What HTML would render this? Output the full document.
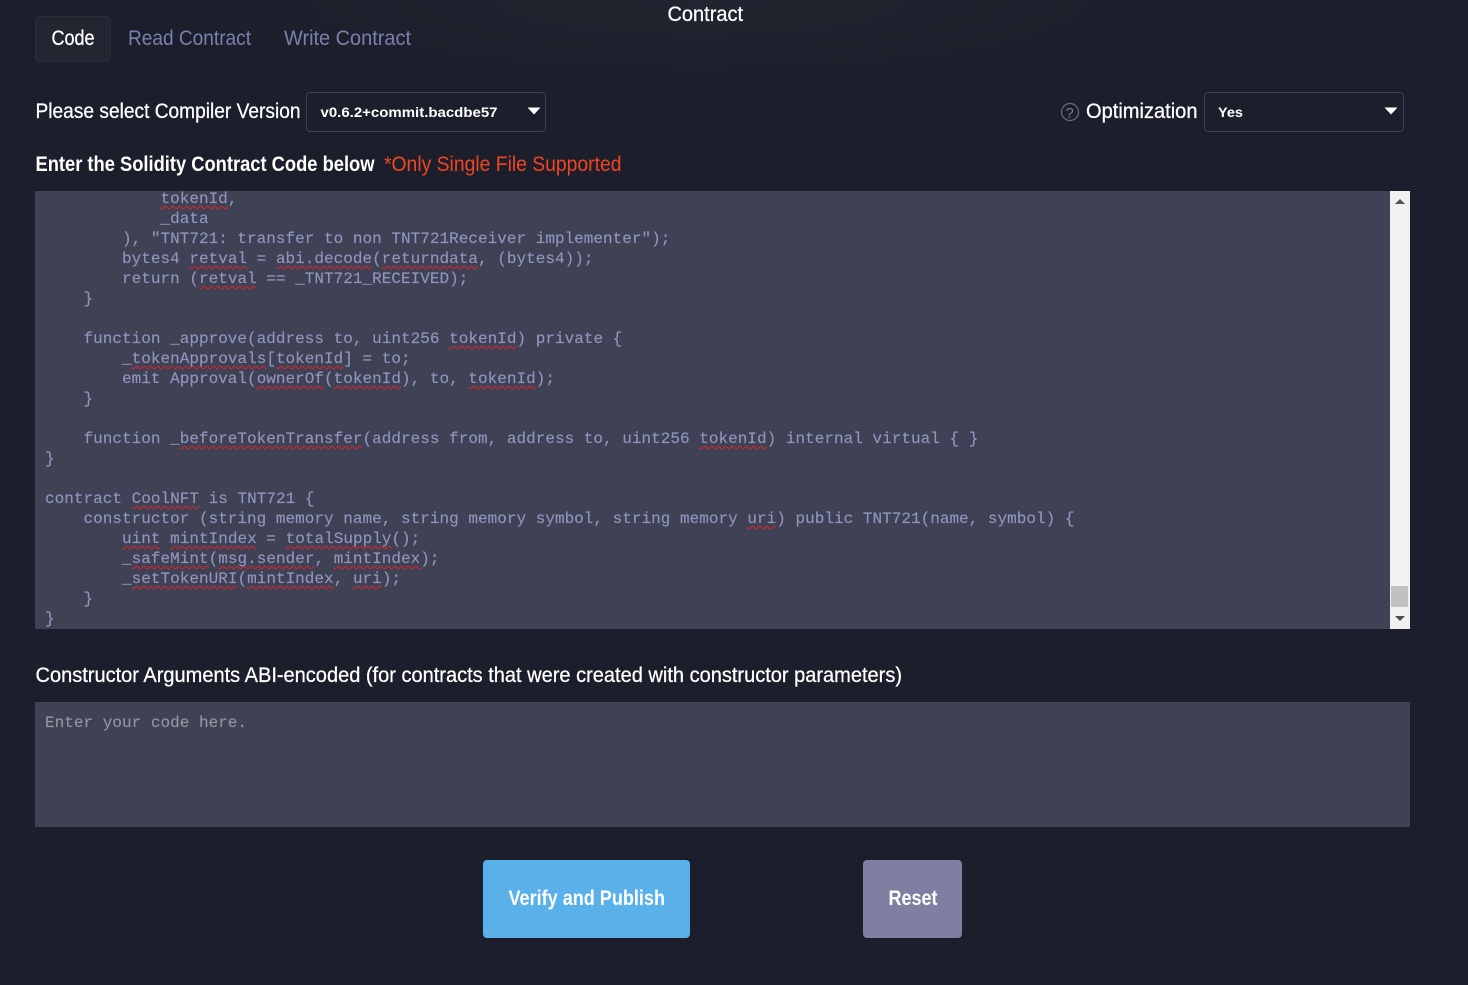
<!DOCTYPE html>
<html lang="en">
<head>
<meta charset="utf-8">
<title>Contract</title>
<style>
html,body{margin:0;padding:0;background:#1c1f2b;}
body{position:relative;width:1468px;height:985px;overflow:hidden;font-family:"Liberation Sans",sans-serif;}
.glow{position:absolute;left:0;top:0;width:1468px;height:90px;background:radial-gradient(ellipse 520px 90px at 700px 0,#212530 0%,#1c1f2b 100%);}
.tab{position:absolute;left:35px;top:16px;width:74px;height:44px;background:#232631;border:1px solid #2b2e3a;border-radius:5px;}
.sel{position:absolute;box-sizing:border-box;height:40px;top:92px;border:1px solid #3c3e56;border-radius:4px;background:#1c1f2b;}
.panel{position:absolute;left:35px;background:#3f4154;}
#code{top:191px;width:1355px;height:438px;overflow:hidden;}
#code pre{position:absolute;left:10px;top:-2px;margin:0;font:16px/20px "Liberation Mono",monospace;letter-spacing:.02px;color:#9095bd;white-space:pre;-webkit-text-stroke:.15px #9095bd;}
#code u{text-decoration:underline wavy #e3222b 1.3px;text-underline-offset:1.5px;text-decoration-skip-ink:none;}
#abi{top:702px;width:1375px;height:125px;}
#abi div{position:absolute;left:10px;top:11px;font:16px/20px "Liberation Mono",monospace;letter-spacing:.02px;color:#92949f;-webkit-text-stroke:.15px #92949f;}
.sb{position:absolute;left:1390px;top:191px;width:20px;height:438px;background:#f1f1f1;}
.thumb{position:absolute;left:1px;top:395px;width:17px;height:21px;background:#c1c1c1;}
.up{position:absolute;left:5px;top:8px;width:0;height:0;border-left:5px solid transparent;border-right:5px solid transparent;border-bottom:5px solid #505050;}
.dn{position:absolute;left:5px;top:425px;width:0;height:0;border-left:5px solid transparent;border-right:5px solid transparent;border-top:5px solid #505050;}
.btn{position:absolute;top:860px;height:78px;border-radius:4px;}
svg.t{position:absolute;left:0;top:0;width:1468px;height:985px;}
svg.t text{font-family:"Liberation Sans",sans-serif;fill:#fff;}
svg.t text.s{stroke:#fff;stroke-width:.25px;}
</style>
</head>
<body>
<div class="glow"></div>
<div class="tab"></div>
<div class="sel" style="left:306px;width:240px"></div>
<div class="sel" style="left:1204px;width:200px"></div>
<div class="panel" id="code"><pre>            <u>tokenId</u>,
            _data
        ), "TNT721: transfer to non TNT721Receiver implementer");
        bytes4 <u>retval</u> = <u>abi.decode</u>(<u>returndata</u>, (bytes4));
        return (<u>retval</u> == _TNT721_RECEIVED);
    }

    function _approve(address to, uint256 <u>tokenId</u>) private {
        _<u>tokenApprovals</u>[<u>tokenId</u>] = to;
        emit Approval(<u>ownerOf</u>(<u>tokenId</u>), to, <u>tokenId</u>);
    }

    function _<u>beforeTokenTransfer</u>(address from, address to, uint256 <u>tokenId</u>) internal virtual { }
}

contract <u>CoolNFT</u> is TNT721 {
    constructor (string memory name, string memory symbol, string memory <u>uri</u>) public TNT721(name, symbol) {
        <u>uint</u> <u>mintIndex</u> = <u>totalSupply</u>();
        _<u>safeMint</u>(<u>msg.sender</u>, <u>mintIndex</u>);
        _<u>setTokenURI</u>(<u>mintIndex</u>, <u>uri</u>);
    }
}</pre></div>
<div class="sb"><div class="up"></div><div class="thumb"></div><div class="dn"></div></div>
<div class="panel" id="abi"><div>Enter your code here.</div></div>
<div class="btn" style="left:483px;width:207px;background:#5ab1e9"></div>
<div class="btn" style="left:863px;width:99px;background:#7f80a1"></div>
<svg class="t" viewBox="0 0 1468 985" xmlns="http://www.w3.org/2000/svg">
<text class="s" x="667.5" y="21" font-size="21" textLength="75.5" lengthAdjust="spacingAndGlyphs">Contract</text>
<text class="s" x="51.5" y="45" font-size="21" textLength="43" lengthAdjust="spacingAndGlyphs">Code</text>
<text x="128" y="45" font-size="21" textLength="123" lengthAdjust="spacingAndGlyphs" style="fill:#7880ad">Read Contract</text>
<text x="284" y="45" font-size="21" textLength="127" lengthAdjust="spacingAndGlyphs" style="fill:#7880ad">Write Contract</text>
<text class="s" x="35.5" y="118" font-size="21" textLength="265" lengthAdjust="spacingAndGlyphs">Please select Compiler Version</text>
<text x="320.5" y="117" font-size="14" font-weight="700" textLength="177" lengthAdjust="spacingAndGlyphs">v0.6.2+commit.bacdbe57</text>
<path d="M527.5 107.5h13l-6.5 7z" fill="#fff"/>
<circle cx="1070" cy="112" r="8.5" fill="none" stroke="#6a6c86" stroke-width="1.2"/>
<text x="1065.5" y="118" font-size="15" style="fill:#7a7c96">?</text>
<text class="s" x="1086" y="118" font-size="21" textLength="111.5" lengthAdjust="spacingAndGlyphs">Optimization</text>
<text x="1218" y="117" font-size="14" font-weight="700" textLength="25" lengthAdjust="spacingAndGlyphs">Yes</text>
<path d="M1384.5 107.5h13l-6.5 7z" fill="#fff"/>
<text x="35.5" y="171" font-size="21" font-weight="700" textLength="339" lengthAdjust="spacingAndGlyphs">Enter the Solidity Contract Code below</text>
<text x="384" y="171" font-size="21" textLength="237.5" lengthAdjust="spacingAndGlyphs" style="fill:#f2451f">*Only Single File Supported</text>
<text class="s" x="35.5" y="682" font-size="21" textLength="866.5" lengthAdjust="spacingAndGlyphs">Constructor Arguments ABI-encoded (for contracts that were created with constructor parameters)</text>
<text x="508.5" y="905" font-size="21" font-weight="700" textLength="156.5" lengthAdjust="spacingAndGlyphs">Verify and Publish</text>
<text x="888.5" y="905" font-size="21" font-weight="700" textLength="49" lengthAdjust="spacingAndGlyphs">Reset</text>
</svg>
</body>
</html>
